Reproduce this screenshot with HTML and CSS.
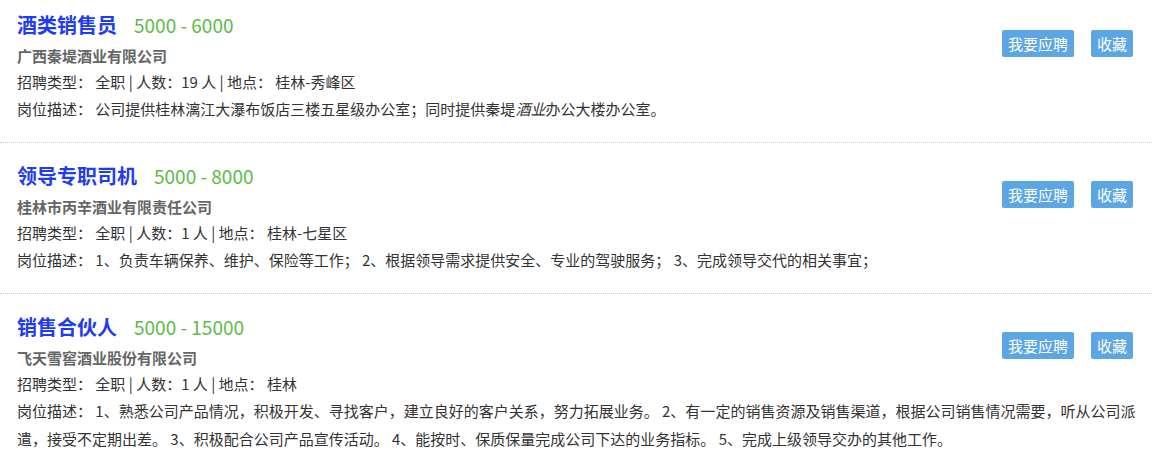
FILE: index.html
```html
<!DOCTYPE html>
<html lang="zh-CN">
<head>
<meta charset="utf-8">
<title>招聘</title>
<link rel="stylesheet" href="styles.css">
</head>
<body>
<div class="list">
  <div class="job first">
    <div class="head">
      <div class="head-main">
        <div class="title-row"><span class="title">酒类销售员</span><span class="salary">5000 - 6000</span></div>
        <div class="company">广西秦堤酒业有限公司</div>
      </div>
      <div class="actions"><a class="btn">我要应聘</a><a class="btn">收藏</a></div>
    </div>
    <div class="info">招聘类型： 全职 | 人数：19 人 | 地点： 桂林-秀峰区</div>
    <div class="desc">岗位描述： 公司提供桂林漓江大瀑布饭店三楼五星级办公室；同时提供秦堤<em>酒业</em>办公大楼办公室。</div>
  </div>
  <div class="job">
    <div class="head">
      <div class="head-main">
        <div class="title-row"><span class="title">领导专职司机</span><span class="salary">5000 - 8000</span></div>
        <div class="company">桂林市丙辛酒业有限责任公司</div>
      </div>
      <div class="actions"><a class="btn">我要应聘</a><a class="btn">收藏</a></div>
    </div>
    <div class="info">招聘类型： 全职 | 人数：1 人 | 地点： 桂林-七星区</div>
    <div class="desc">岗位描述： 1、负责车辆保养、维护、保险等工作； 2、根据领导需求提供安全、专业的驾驶服务； 3、完成领导交代的相关事宜；</div>
  </div>
  <div class="job">
    <div class="head">
      <div class="head-main">
        <div class="title-row"><span class="title">销售合伙人</span><span class="salary">5000 - 15000</span></div>
        <div class="company">飞天雪窖酒业股份有限公司</div>
      </div>
      <div class="actions"><a class="btn">我要应聘</a><a class="btn">收藏</a></div>
    </div>
    <div class="info">招聘类型： 全职 | 人数：1 人 | 地点： 桂林</div>
    <div class="desc">岗位描述： 1、熟悉公司产品情况，积极开发、寻找客户，建立良好的客户关系，努力拓展业务。 2、有一定的销售资源及销售渠道，根据公司销售情况需要，听从公司派遣，接受不定期出差。 3、积极配合公司产品宣传活动。 4、能按时、保质保量完成公司下达的业务指标。 5、完成上级领导交办的其他工作。</div>
  </div>
</div>
</body>
</html>
```
FILE: styles.css
```css
html, body {
  margin: 0;
  padding: 0;
  background: #fff;
}
body {
  font-family: "Noto Sans CJK SC", "Microsoft YaHei", sans-serif;
  font-size: 15px;
  color: #333;
}
.list {
  width: 1152px;
}
.job {
  padding: 18px 12px 19px 17px;
  border-bottom: 1px dotted #c8c8c8;
}
.job.first {
  padding-top: 10px;
}
.head {
  display: flex;
  align-items: flex-start;
}
.head-main {
  flex: 1;
}
.title-row {
  height: 30px;
  line-height: 30px;
  margin-bottom: 3px;
  white-space: nowrap;
}
.title {
  font-size: 20px;
  font-weight: bold;
  color: #1f3cf2;
}
.salary {
  font-size: 19px;
  color: #5dbb47;
  margin-left: 17px;
}
.company {
  line-height: 26px;
  height: 26px;
  font-weight: bold;
  color: #666;
}
.actions {
  display: flex;
  gap: 17px;
  margin-top: 20px;
  margin-right: 7px;
}
.btn {
  display: block;
  height: 27px;
  line-height: 27px;
  padding: 0 6px;
  background: #5ca7e3;
  color: #fff;
  border-radius: 2px;
  font-size: 15px;
  cursor: pointer;
}
.info {
  line-height: 26px;
}
.desc {
  line-height: 28px;
}
.desc em {
  font-style: italic;
}
```
